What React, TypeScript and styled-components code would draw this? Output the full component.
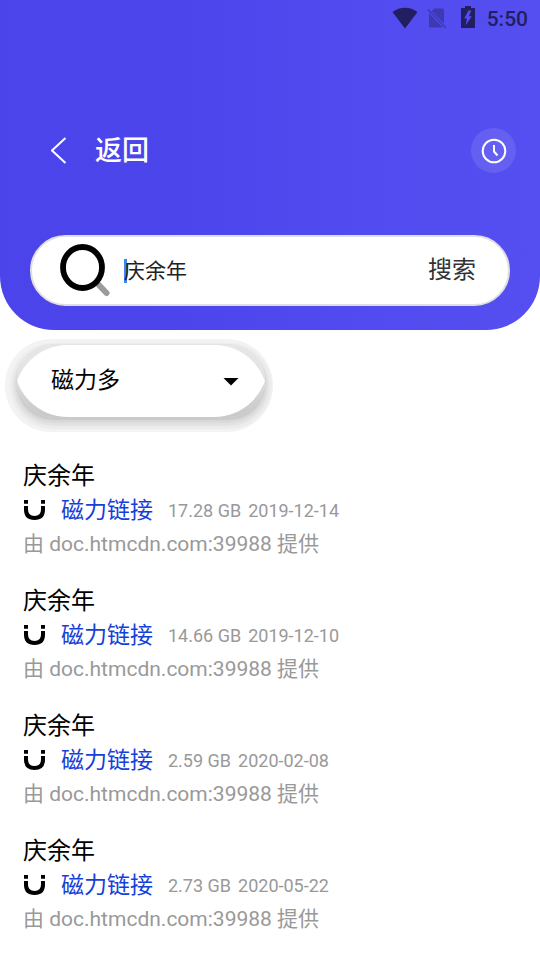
import React, { useState } from "react";
import styled, { createGlobalStyle } from "styled-components";

const GlobalStyle = createGlobalStyle`
  * { box-sizing: border-box; }
  html, body { margin: 0; background: #ffffff; }
  body, button, input, select {
    font-family: Roboto, "Noto Sans CJK SC", sans-serif;
  }
  button, input, select {
    margin: 0;
    padding: 0;
    border: 0;
    background: none;
    outline: none;
  }
  button { cursor: pointer; }
  svg { display: block; flex: none; }
`;

const Page = styled.div`
  min-height: 100vh;
  overflow: hidden;
`;

const Header = styled.header`
  padding-bottom: 24px;
  border-radius: 0 0 54px 54px;
  background: linear-gradient(90deg, #4b44eb 0%, #4c45ec 30%, #524bef 70%, #554ff1 100%);
`;

const StatusBar = styled.div`
  display: flex;
  align-items: center;
  height: 36px;
  padding: 0 12px;
  justify-content: flex-end;
  color: #221e5f;
`;

const StatusIcons = styled.div`
  display: flex;
  align-items: center;
  gap: 9px;
  margin-right: 11px;
`;

const Clock = styled.time`
  font-size: 21px;
  font-weight: 500;
  line-height: 36px;
  padding-top: 2px;
`;

const TitleBar = styled.div`
  display: flex;
  align-items: center;
  justify-content: space-between;
  margin-top: 92px;
  padding: 0 24px 0 51px;
`;

const BackButton = styled.button`
  display: flex;
  align-items: center;
  gap: 28px;
  height: 45px;
  color: #ffffff;
  font-size: 27px;
  font-weight: 500;
  line-height: 42px;
`;

const BackLabel = styled.span`
  padding-top: 1px;
`;

const HistoryButton = styled.button`
  display: grid;
  place-items: center;
  width: 45px;
  height: 45px;
  border-radius: 50%;
  background: rgba(255, 255, 255, 0.1);
  color: #ffffff;
`;

const SearchForm = styled.form`
  display: flex;
  align-items: center;
  height: 71px;
  margin: 62px 30px 0;
  padding: 0 32px 0 28px;
  border: 2px solid #dfdfdf;
  border-radius: 36px;
  background: #ffffff;
`;

const InputWrap = styled.div`
  position: relative;
  flex: 1;
  min-width: 0;
  margin-left: 14px;
`;

const Caret = styled.span`
  position: absolute;
  left: 0;
  top: 4px;
  width: 3px;
  height: 24px;
  background: #3e86f7;
`;

const SearchInput = styled.input`
  position: relative;
  display: block;
  width: 100%;
  height: 32px;
  color: #212121;
  font-size: 21px;
  line-height: 32px;
`;

const SearchButton = styled.button`
  color: #333333;
  font-size: 24px;
  line-height: 36px;
  padding-bottom: 2px;
`;

const SourceHalo = styled.div`
  width: fit-content;
  margin: 9px 5px 0;
  padding: 6px 8px 15px 12px;
  border-radius: 46px;
  background: #f3f3f3;
`;

const SourceBox = styled.div`
  position: relative;
  height: 72px;
  border-radius: 36px;
  background: linear-gradient(#e6e6e8 0%, #e4e4e6 40%, #d3d3d3 70%, #c8c8c8 100%);
  box-shadow:
    0 -1px 0 0 #e4e4e6,
    0 3px 1px 0 #cacaca,
    0 4px 2px 2px #d9d9d9,
    0 5px 1px 4px #e4e4e4,
    0 5px 1px 7px #ececec;

  &::before,
  &::after {
    content: "";
    position: absolute;
    left: 0;
    right: 0;
    height: 36px;
    background: #ffffff;
  }

  &::before {
    top: 0;
    clip-path: inset(0 -3px -72px -3px round 54px);
  }

  &::after {
    bottom: 0;
    clip-path: inset(-72px -3px 0 -3px round 54px);
  }
`;

const SourceSelect = styled.select`
  position: relative;
  z-index: 1;
  display: block;
  appearance: none;
  width: 248px;
  height: 72px;
  padding: 0 60px 0 34px;
  color: #000000;
  font-size: 23px;
  line-height: 36px;
`;

const SelectArrow = styled.svg`
  position: absolute;
  z-index: 1;
  right: 26px;
  top: 33px;
  pointer-events: none;
`;

const Results = styled.ul`
  display: grid;
  gap: 21px;
  margin: 25px 0 0;
  padding: 0 23px;
  list-style: none;
`;

const ResultTitle = styled.h2`
  margin: 0;
  color: #000000;
  font-size: 24px;
  font-weight: 400;
  line-height: 38px;
`;

const ResultLine = styled.div`
  display: flex;
  align-items: center;
  height: 32px;
`;

const MagnetLink = styled.a`
  margin: 0 15px;
  color: #1540d8;
  font-size: 23px;
  line-height: 32px;
  text-decoration: none;
`;

const Meta = styled.span`
  margin-right: 7px;
  color: #999999;
  font-size: 18px;
  line-height: 32px;
`;

const Provider = styled.p`
  margin: 0;
  color: #999999;
  font-size: 21px;
  line-height: 34px;
`;

const results = [
  { size: "17.28 GB", date: "2019-12-14" },
  { size: "14.66 GB", date: "2019-12-10" },
  { size: "2.59 GB", date: "2020-02-08" },
  { size: "2.73 GB", date: "2020-05-22" },
];

const WifiIcon = () => (
  <svg width="26" height="23" viewBox="0 0 26 23" aria-hidden="true">
    <path d="M0.5 5C8 -0.7 18 -0.7 25.5 5L13 21.5Z" fill="currentColor" />
  </svg>
);

const NoSimIcon = () => (
  <svg width="20" height="23" viewBox="0 0 20 23" aria-hidden="true" opacity="0.42">
    <path d="M7.5 1.5H15.5Q17 1.5 17 3V16.5L4.7 4.2ZM2 6L15.8 20.2Q15.5 20.5 15 20.5H3.5Q2 20.5 2 19Z" fill="currentColor" />
    <path d="M1 2.5L19 21" stroke="currentColor" strokeWidth="1.6" />
  </svg>
);

const BatteryIcon = () => (
  <svg width="20" height="25" viewBox="3 0 20 25" aria-hidden="true">
    <path fillRule="evenodd" d="M12 0H18V2H22V22H8V2H12ZM15.4 4.5L11.2 12.5H14L12.6 19.5L18.8 10.2H15.9L18.4 4.5Z" fill="currentColor" />
  </svg>
);

const BackIcon = () => (
  <svg width="16" height="27" viewBox="0 0 16 27" fill="none" aria-hidden="true">
    <path d="M14.5 1L1 13.5L14.5 26" stroke="currentColor" strokeWidth="2" />
  </svg>
);

const HistoryIcon = () => (
  <svg width="26" height="26" viewBox="0 0 26 26" fill="none" stroke="currentColor" strokeWidth="2" aria-hidden="true">
    <circle cx="13" cy="13" r="11.3" />
    <path d="M13 7V13.5L16.5 17.5" />
  </svg>
);

const SearchIcon = () => (
  <svg width="50" height="55" viewBox="0 0 50 55" fill="none" aria-hidden="true">
    <path d="M37 40L46.5 50" stroke="#9b9b9b" strokeWidth="6" strokeLinecap="round" />
    <ellipse cx="22.5" cy="24.5" rx="19.5" ry="20.5" stroke="#000000" strokeWidth="5.8" />
  </svg>
);

const MagnetIcon = () => (
  <svg width="23" height="24" viewBox="0 0 23 24" fill="none" stroke="#000000" strokeWidth="4" aria-hidden="true">
    <path d="M3 7V10.5C3 16.5 6.5 19 11.5 19S20 16.5 20 10.5V7" />
    <path d="M3 1V4.8M20 1V4.8" />
  </svg>
);

export default function App() {
  const [query, setQuery] = useState("庆余年");

  return (
    <Page>
      <GlobalStyle />
      <Header>
        <StatusBar>
          <StatusIcons>
            <WifiIcon />
            <NoSimIcon />
            <BatteryIcon />
          </StatusIcons>
          <Clock>5:50</Clock>
        </StatusBar>
        <TitleBar>
          <BackButton type="button">
            <BackIcon />
            <BackLabel>返回</BackLabel>
          </BackButton>
          <HistoryButton type="button" aria-label="历史">
            <HistoryIcon />
          </HistoryButton>
        </TitleBar>
        <SearchForm onSubmit={(e) => e.preventDefault()}>
          <SearchIcon />
          <InputWrap>
            <Caret />
            <SearchInput
              type="text"
              aria-label="搜索"
              value={query}
              onChange={(e) => setQuery(e.target.value)}
            />
          </InputWrap>
          <SearchButton type="submit">搜索</SearchButton>
        </SearchForm>
      </Header>
      <main>
        <SourceHalo>
          <SourceBox>
            <SourceSelect aria-label="来源">
              <option>磁力多</option>
            </SourceSelect>
            <SelectArrow width="16" height="8" viewBox="0 0 16 8" aria-hidden="true">
              <path d="M0.5 0H15.5L8 7.5Z" fill="#000000" />
            </SelectArrow>
          </SourceBox>
        </SourceHalo>
        <Results>
          {results.map((item) => (
            <li key={item.date}>
              <ResultTitle>庆余年</ResultTitle>
              <ResultLine>
                <MagnetIcon />
                <MagnetLink href="#">磁力链接</MagnetLink>
                <Meta>{item.size}</Meta>
                <Meta>{item.date}</Meta>
              </ResultLine>
              <Provider>由 doc.htmcdn.com:39988 提供</Provider>
            </li>
          ))}
        </Results>
      </main>
    </Page>
  );
}
